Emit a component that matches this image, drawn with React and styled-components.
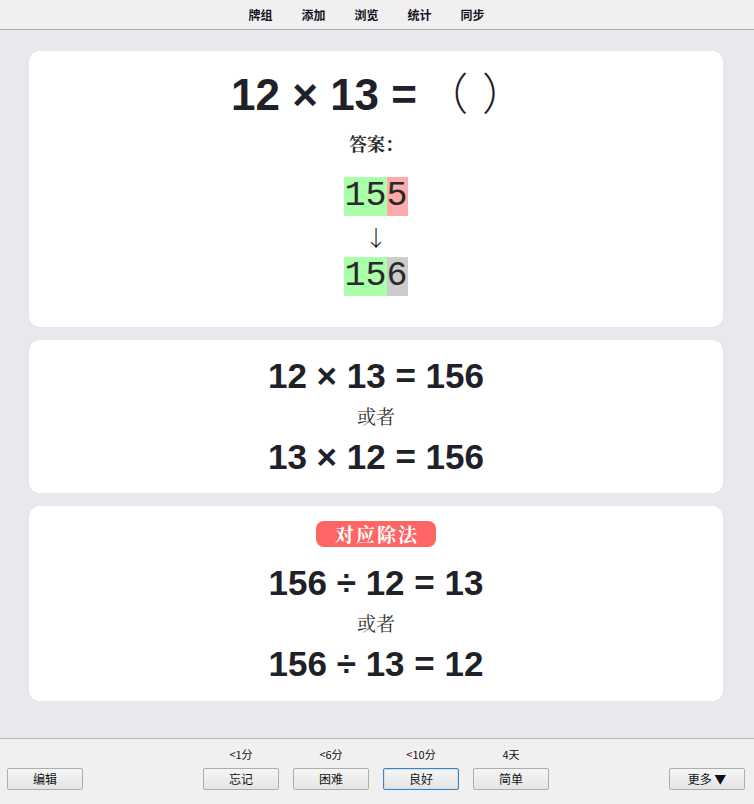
import React from "react";
import styled, { createGlobalStyle } from "styled-components";

const Global = createGlobalStyle`
  html, body { margin: 0; padding: 0; }
  body {
    background: #e9e9ed;
    font-family: "Liberation Sans", "Noto Sans CJK SC", sans-serif;
  }
`;

const Page = styled.div`
  display: flex;
  flex-direction: column;
  height: 804px;
  width: 754px;
  overflow: hidden;
`;

const TopBar = styled.nav`
  height: 29px;
  flex: 0 0 29px;
  background: #f0f0f0;
  border-bottom: 1px solid #acacac;
  display: flex;
  align-items: center;
  justify-content: center;
  gap: 29px;
  padding-right: 21px;
`;

const NavItem = styled.span`
  font-family: "Noto Sans CJK SC", sans-serif;
  font-weight: 700;
  font-size: 12px;
  line-height: 16px;
  color: #15101c;
`;

const Main = styled.main`
  flex: 1;
  display: flex;
  flex-direction: column;
  gap: 13px;
  padding: 21px 31px 0 29px;
`;

const Card = styled.section`
  background: #ffffff;
  border-radius: 10px;
  box-shadow: 0 0 1px rgba(0, 0, 0, 0.12);
  display: flex;
  flex-direction: column;
  align-items: center;
  color: #1e2128;
  padding: ${(p) => p.$pad};
`;

const Equation = styled.div`
  font-family: "Liberation Sans", "Noto Sans CJK SC", sans-serif;
  font-weight: 700;
  font-size: ${(p) => p.$size}px;
  line-height: ${(p) => p.$lh}px;
  height: ${(p) => p.$lh}px;
  margin-top: ${(p) => p.$mt || 0}px;
  padding-left: ${(p) => p.$pl || 0}px;
  white-space: pre;
`;

const Paren = styled.span`
  font-family: "Noto Sans CJK SC", sans-serif;
  font-weight: 300;
  line-height: 0;
  margin-left: -5px;
  word-spacing: 4px;
`;

const Label = styled.div`
  font-family: "Noto Serif CJK SC", "Noto Sans CJK SC", serif;
  font-weight: ${(p) => (p.$bold ? 700 : 400)};
  font-size: ${(p) => p.$size}px;
  line-height: ${(p) => p.$lh}px;
  margin-top: ${(p) => p.$mt || 0}px;
  color: #2a2a2a;
`;

const TypedRow = styled.div`
  display: flex;
  margin-top: ${(p) => p.$mt || 0}px;
  font-family: "Liberation Mono", "DejaVu Sans Mono", monospace;
  font-size: 35px;
  line-height: 39px;
  height: 39px;
  color: #2a2a2a;
`;

const TypedSpan = styled.span`
  background: ${(p) => p.$bg};
`;

const Arrow = styled.div`
  font-family: "Noto Sans CJK SC", sans-serif;
  font-weight: 300;
  font-size: 22px;
  line-height: 41px;
  height: 41px;
  color: #1a1a1a;
`;

const Badge = styled.div`
  background: #fe6565;
  color: #ffffff;
  border-radius: 8px;
  height: 26px;
  line-height: 26px;
  padding: 0 17px 0 19px;
  font-family: "Noto Serif CJK SC", "Noto Sans CJK SC", serif;
  font-weight: 700;
  font-size: 19px;
  letter-spacing: 2px;
`;

const BottomBar = styled.footer`
  flex: 0 0 66px;
  height: 66px;
  box-sizing: border-box;
  background: #f0f0f0;
  border-top: 1px solid #b4b4b4;
  display: grid;
  grid-template-columns: 1fr auto 1fr;
  align-items: end;
  padding: 7px 9px 14px 7px;
`;

const Side = styled.div`
  display: flex;
  justify-content: ${(p) => p.$justify};
`;

const Group = styled.div`
  display: flex;
  gap: 14px;
`;

const Choice = styled.div`
  display: flex;
  flex-direction: column;
  align-items: center;
  gap: 6px;
`;

const Due = styled.span`
  font-family: "Noto Sans CJK SC", sans-serif;
  font-size: 11px;
  line-height: 16px;
  color: #111;
`;

const Button = styled.button`
  width: 76px;
  height: 22px;
  box-sizing: border-box;
  padding: 0;
  border-radius: 2px;
  border: 1px solid ${(p) => (p.$focus ? "#3f82c0" : "#adadad")};
  box-shadow: ${(p) => (p.$focus ? "inset 0 0 0 1px #c9dff2" : "none")};
  background: linear-gradient(#f6f6f6, #e4e4e4);
  font-family: "Noto Sans CJK SC", sans-serif;
  font-size: 12px;
  line-height: 18px;
  color: #111;
`;

const buttons = [
  { due: "<1分", label: "忘记" },
  { due: "<6分", label: "困难" },
  { due: "<10分", label: "良好", focus: true },
  { due: "4天", label: "简单" },
];

export default function App() {
  return (
    <>
      <Global />
      <Page>
        <TopBar>
          {["牌组", "添加", "浏览", "统计", "同步"].map((t) => (
            <NavItem key={t}>{t}</NavItem>
          ))}
        </TopBar>
        <Main>
          <Card $pad="16px 0 31px">
            <Equation $size={44} $lh={56} $pl={5}>
              12 × 13 = <Paren>（ ）</Paren>
            </Equation>
            <Label $bold $size={18} $lh={24} $mt={8}>
              答案：
            </Label>
            <TypedRow $mt={22}>
              <TypedSpan $bg="#aaffaa">15</TypedSpan>
              <TypedSpan $bg="#ffaaaa">5</TypedSpan>
            </TypedRow>
            <Arrow>↓</Arrow>
            <TypedRow>
              <TypedSpan $bg="#aaffaa">15</TypedSpan>
              <TypedSpan $bg="#cccccc">6</TypedSpan>
            </TypedRow>
          </Card>
          <Card $pad="12px 0 11px">
            <Equation $size={35} $lh={48}>12 × 13 = 156</Equation>
            <Label $size={19} $lh={32}>或者</Label>
            <Equation $size={35} $lh={50}>13 × 12 = 156</Equation>
          </Card>
          <Card $pad="15px 0 12px">
            <Badge>对应除法</Badge>
            <Equation $size={35} $lh={48} $mt={12}>156 ÷ 12 = 13</Equation>
            <Label $size={19} $lh={32}>或者</Label>
            <Equation $size={35} $lh={50}>156 ÷ 13 = 12</Equation>
          </Card>
        </Main>
        <BottomBar>
          <Side $justify="flex-start">
            <Button>编辑</Button>
          </Side>
          <Group>
            {buttons.map((b) => (
              <Choice key={b.label}>
                <Due>{b.due}</Due>
                <Button $focus={b.focus}>{b.label}</Button>
              </Choice>
            ))}
          </Group>
          <Side $justify="flex-end">
            <Button>更多 ▼</Button>
          </Side>
        </BottomBar>
      </Page>
    </>
  );
}
